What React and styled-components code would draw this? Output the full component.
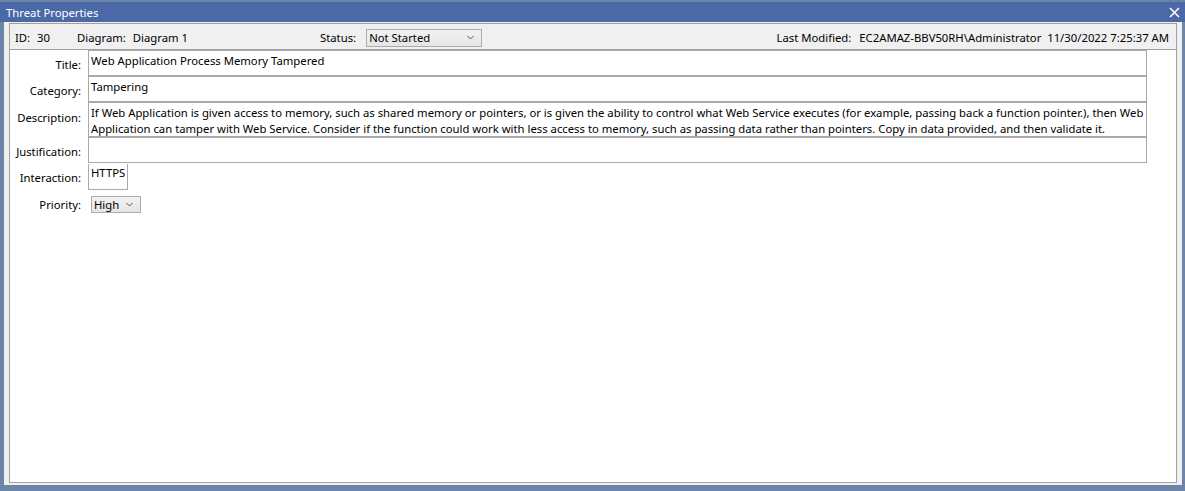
import React from "react";
import styled, { createGlobalStyle } from "styled-components";

const FONT = `"Noto Sans", "Liberation Sans", sans-serif`;

const GlobalStyle = createGlobalStyle`
  html, body {
    margin: 0;
    padding: 0;
    background: #6b84a8;
  }
  body {
    font-family: ${FONT};
    font-size: 11.3px;
    color: #000;
  }
`;

const descriptionLines = [
  "If Web Application is given access to memory, such as shared memory or pointers, or is given the ability to control what Web Service executes (for example, passing back a function pointer.), then Web",
  "Application can tamper with Web Service. Consider if the function could work with less access to memory, such as passing data rather than pointers. Copy in data provided, and then validate it.",
];

function App() {
  return (
    <>
      <GlobalStyle />
      <Frame>
        <TitleBar>
          <TitleText>Threat Properties</TitleText>
          <CloseButton aria-label="close">
            <svg width="11" height="11" viewBox="0 0 11 11">
              <path d="M1 1 L10 10 M10 1 L1 10" stroke="#fff" strokeWidth="1.6" />
            </svg>
          </CloseButton>
        </TitleBar>
        <Body>
          <Panel>
            <HeaderRow>
              <Meta $width={62}>
                <MetaLabel>ID:</MetaLabel>
                <span>30</span>
              </Meta>
              <Meta $width={243}>
                <MetaLabel>Diagram:</MetaLabel>
                <span>Diagram 1</span>
              </Meta>
              <Meta $grow $gap={10}>
                <MetaLabel>Status:</MetaLabel>
                <Select $width={116}>
                  <span>Not Started</span>
                  <Chevron />
                </Select>
              </Meta>
              <Meta $gap={8}>
                <MetaLabel>Last Modified:</MetaLabel>
                <span>EC2AMAZ-BBV50RH\Administrator&nbsp;&nbsp;11/30/2022 7:25:37 AM</span>
              </Meta>
            </HeaderRow>
            <Form>
              <Label $h={26}>Title:</Label>
              <Field $h={26}>Web Application Process Memory Tampered</Field>
              <Label $h={26}>Category:</Label>
              <Field $h={26}>Tampering</Field>
              <Label $h={35} $shift={-3}>Description:</Label>
              <Field $h={35}>
                {descriptionLines.map((line) => (
                  <Line key={line}>{line}</Line>
                ))}
              </Field>
              <Label $h={26}>Justification:</Label>
              <Field $h={26} />
              <Label $h={26}>Interaction:</Label>
              <div>
                <SmallField>HTTPS</SmallField>
              </div>
              <Label $h={29}>Priority:</Label>
              <PriorityCell>
                <Select $width={50} $small>
                  <span>High</span>
                  <Chevron />
                </Select>
              </PriorityCell>
            </Form>
          </Panel>
        </Body>
      </Frame>
    </>
  );
}

function Chevron() {
  return (
    <ChevronIcon width="7" height="5" viewBox="0 0 7 5">
      <path d="M0.5 1 L3.5 4 L6.5 1" fill="none" stroke="#555" strokeWidth="1" />
    </ChevronIcon>
  );
}

const Frame = styled.div`
  width: 1185px;
  height: 491px;
  box-sizing: border-box;
  padding-top: 2px;
  display: flex;
  flex-direction: column;
  background: #6b84a8;
`;

const TitleBar = styled.div`
  height: 20px;
  background: #4a69a6;
  display: flex;
  align-items: center;
  justify-content: space-between;
  padding: 0 5px 0 6px;
  color: #fff;
`;

const TitleText = styled.span`
  font-size: 11.3px;
  line-height: 20px;
  padding-top: 1px;
`;

const CloseButton = styled.div`
  width: 12px;
  height: 12px;
  display: flex;
  align-items: center;
  justify-content: center;
`;

const Body = styled.div`
  flex: 1;
  margin: 0 3px 6px 4px;
  padding: 1px 5px 2px 5px;
  background: #f0f0f0;
  display: flex;
`;

const Panel = styled.div`
  flex: 1;
  border: 1px solid #a0a0a0;
  display: flex;
  flex-direction: column;
  background: #fff;
`;

const HeaderRow = styled.div`
  box-sizing: border-box;
  height: 26px;
  background: #f0f0f0;
  border-bottom: 1px solid #a0a0a0;
  display: flex;
  align-items: center;
  padding: 2px 7px 0 5px;
`;

const Meta = styled.div`
  display: flex;
  align-items: center;
  gap: ${(p) => p.$gap || 7}px;
  flex: none;
  width: ${(p) => (p.$width ? `${p.$width}px` : "auto")};
  margin-right: ${(p) => (p.$grow ? "auto" : "0")};
`;

const MetaLabel = styled.span`
  color: #000;
`;

const Select = styled.div`
  box-sizing: border-box;
  width: ${(p) => p.$width}px;
  height: ${(p) => (p.$small ? 17 : 18)}px;
  border: 1px solid #acacac;
  background: linear-gradient(#f2f2f2, #e5e5e5);
  display: flex;
  align-items: center;
  justify-content: space-between;
  padding: 0 7px 0 2px;
  line-height: 1;
`;

const ChevronIcon = styled.svg`
  flex: none;
`;

const Form = styled.div`
  flex: 1;
  display: grid;
  grid-template-columns: 78px 1059px;
  grid-auto-rows: min-content;
  align-content: start;
  padding-top: 1px;
  background: #fff;
`;

const Label = styled.div`
  height: ${(p) => p.$h}px;
  display: flex;
  align-items: center;
  justify-content: flex-end;
  padding-right: 7px;
  position: relative;
  top: ${(p) => p.$shift || 0}px;
`;

const Field = styled.div`
  box-sizing: border-box;
  height: ${(p) => p.$h}px;
  border: 1px solid #a9a9a9;
  margin-top: -1px;
  padding: 2px 2px;
  line-height: 16px;
  background: #fff;
  white-space: nowrap;
  overflow: hidden;
  &:first-of-type {
    margin-top: 0;
  }
`;

const Line = styled.div``;

const SmallField = styled.div`
  display: inline-block;
  box-sizing: border-box;
  height: 26px;
  border: 1px solid #a9a9a9;
  border-top: none;
  padding: 0 2px;
  line-height: 18px;
`;

const PriorityCell = styled.div`
  height: 29px;
  display: flex;
  align-items: center;
  padding-left: 3px;
`;

export default App;
